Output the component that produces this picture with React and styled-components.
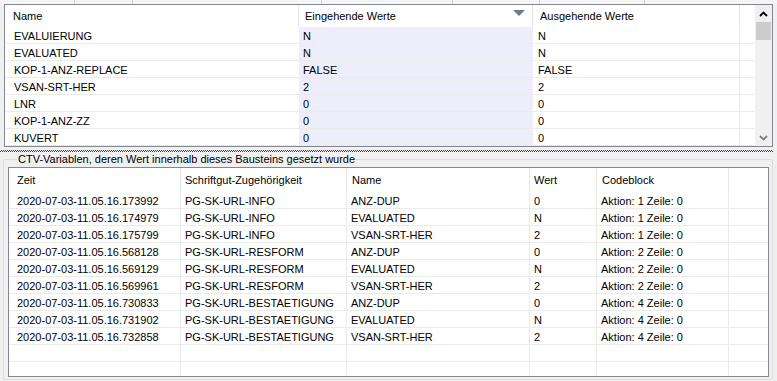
import React from "react";
import styled, { createGlobalStyle } from "styled-components";

const topCols = [294, 234, 207, 15];
const bottomCols = [172, 166, 183, 67, 132, 40];

const topRows = [
  ["EVALUIERUNG", "N", "N"],
  ["EVALUATED", "N", "N"],
  ["KOP-1-ANZ-REPLACE", "FALSE", "FALSE"],
  ["VSAN-SRT-HER", "2", "2"],
  ["LNR", "0", "0"],
  ["KOP-1-ANZ-ZZ", "0", "0"],
  ["KUVERT", "0", "0"],
];

const bottomRows = [
  ["2020-07-03-11.05.16.173992", "PG-SK-URL-INFO", "ANZ-DUP", "0", "Aktion: 1 Zeile: 0"],
  ["2020-07-03-11.05.16.174979", "PG-SK-URL-INFO", "EVALUATED", "N", "Aktion: 1 Zeile: 0"],
  ["2020-07-03-11.05.16.175799", "PG-SK-URL-INFO", "VSAN-SRT-HER", "2", "Aktion: 1 Zeile: 0"],
  ["2020-07-03-11.05.16.568128", "PG-SK-URL-RESFORM", "ANZ-DUP", "0", "Aktion: 2 Zeile: 0"],
  ["2020-07-03-11.05.16.569129", "PG-SK-URL-RESFORM", "EVALUATED", "N", "Aktion: 2 Zeile: 0"],
  ["2020-07-03-11.05.16.569961", "PG-SK-URL-RESFORM", "VSAN-SRT-HER", "2", "Aktion: 2 Zeile: 0"],
  ["2020-07-03-11.05.16.730833", "PG-SK-URL-BESTAETIGUNG", "ANZ-DUP", "0", "Aktion: 4 Zeile: 0"],
  ["2020-07-03-11.05.16.731902", "PG-SK-URL-BESTAETIGUNG", "EVALUATED", "N", "Aktion: 4 Zeile: 0"],
  ["2020-07-03-11.05.16.732858", "PG-SK-URL-BESTAETIGUNG", "VSAN-SRT-HER", "2", "Aktion: 4 Zeile: 0"],
  ["", "", "", "", ""],
  ["", "", "", "", ""],
];

function App() {
  return (
    <>
      <GlobalStyle />
      <Window>
        <TopStrip>
          {[75, 58, 189, 131, 87, 105].map((w, i) => (
            <StripCell key={i} $w={w} />
          ))}
        </TopStrip>

        <TopPanel>
          <TopGrid>
            <Row $cols={topCols} $h={22}>
              <HeadCell $sep $pl={8}>Name</HeadCell>
              <HeadCell $sep $pl={6}>
                Eingehende Werte
                <SortArrow viewBox="0 0 12 6">
                  <path d="M0 0 L12 0 L6 6 Z" fill="#6f7a8a" />
                </SortArrow>
              </HeadCell>
              <HeadCell $sep $pl={7}>Ausgehende Werte</HeadCell>
              <HeadCell />
            </Row>
            {topRows.map((r, i) => (
              <Row key={i} $cols={topCols} $h={17} $line>
                <Cell $pl={9} $pt={3}>{r[0]}</Cell>
                <Cell $bg="#ededfc" $pl={4} $pt={3}>{r[1]}</Cell>
                <Cell $sep $pl={5} $pt={3}>{r[2]}</Cell>
                <Cell />
              </Row>
            ))}
          </TopGrid>
          <ScrollBar>
            <ArrowBox>
              <svg width="9" height="6" viewBox="0 0 9 6">
                <path d="M1 5 L4.5 1.5 L8 5" stroke="#000" strokeWidth="1.8" fill="none" />
              </svg>
            </ArrowBox>
            <Thumb />
            <Track />
            <ArrowBox>
              <svg width="9" height="6" viewBox="0 0 9 6">
                <path d="M1 1 L4.5 4.5 L8 1" stroke="#808080" strokeWidth="1.8" fill="none" />
              </svg>
            </ArrowBox>
          </ScrollBar>
        </TopPanel>

        <Splitter />

        <GroupBox>
          <Legend>CTV-Variablen, deren Wert innerhalb dieses Bausteins gesetzt wurde</Legend>
          <BottomGrid>
            <Row $cols={bottomCols} $h={24}>
              <HeadCell $sep $pt={6} $pl={8}>Zeit</HeadCell>
              <HeadCell $sep $pt={6} $pl={4}>Schriftgut-Zugehörigkeit</HeadCell>
              <HeadCell $sep $pt={6} $pl={5}>Name</HeadCell>
              <HeadCell $sep $pt={6} $pl={4}>Wert</HeadCell>
              <HeadCell $sep $pt={6} $pl={5}>Codeblock</HeadCell>
              <HeadCell />
            </Row>
            {bottomRows.map((r, i) => (
              <Row key={i} $cols={bottomCols} $h={17} $line>
                {r.map((c, j) => (
                  <Cell key={j} $sep $pl={j === 0 ? 8 : 4} $pt={3}>
                    {c}
                  </Cell>
                ))}
                <Cell />
              </Row>
            ))}
          </BottomGrid>
        </GroupBox>
      </Window>
    </>
  );
}

export default App;

const GlobalStyle = createGlobalStyle`
  html, body {
    margin: 0;
    padding: 0;
    background: #f0f0f0;
  }
  body {
    font-family: "Liberation Sans", Arial, sans-serif;
    font-size: 11px;
    color: #000;
  }
`;

const Window = styled.div`
  width: 777px;
  height: 381px;
  display: flex;
  flex-direction: column;
  background: #f0f0f0;
  overflow: hidden;
`;

const TopStrip = styled.div`
  height: 4px;
  display: flex;
  background: #f5f5f5;
`;

const StripCell = styled.div`
  width: ${(p) => p.$w - 1}px;
  border-right: 1px solid #d6d6d6;
`;

const TopPanel = styled.div`
  height: 141px;
  flex-shrink: 0;
  margin: 0 4px 0 4px;
  border: 1px solid #828790;
  background: #fff;
  display: flex;
`;

const TopGrid = styled.div`
  flex: 1;
  overflow: hidden;
`;

const Row = styled.div`
  display: grid;
  grid-template-columns: ${(p) => p.$cols.map((c) => c + "px").join(" ")} 1fr;
  height: ${(p) => p.$h}px;
  border-bottom: ${(p) => (p.$line ? "1px solid #ebebeb" : "none")};
  box-sizing: border-box;
`;

const HeadCell = styled.div`
  position: relative;
  padding: ${(p) => p.$pt || 5}px 0 0 ${(p) => p.$pl || 8}px;
  border-right: ${(p) => (p.$sep ? "1px solid #e5e5e5" : "none")};
  white-space: nowrap;
  overflow: hidden;
  line-height: 13px;
`;

const Cell = styled.div`
  padding: ${(p) => p.$pt || 1}px 0 0 ${(p) => p.$pl || 4}px;
  background: ${(p) => p.$bg || "transparent"};
  border-right: ${(p) => (p.$sep ? "1px solid #ebebeb" : "none")};
  white-space: nowrap;
  overflow: hidden;
  line-height: 13px;
`;

const SortArrow = styled.svg`
  position: absolute;
  right: 7px;
  top: 5px;
  width: 12px;
  height: 6px;
`;

const ScrollBar = styled.div`
  width: 17px;
  background: #f0f0f0;
  display: flex;
  flex-direction: column;
`;

const ArrowBox = styled.div`
  height: 17px;
  display: flex;
  align-items: center;
  justify-content: center;
`;

const Thumb = styled.div`
  height: 18px;
  margin: 0 1px;
  background: #cdcdcd;
`;

const Track = styled.div`
  flex: 1;
`;

const Splitter = styled.div`
  height: 2px;
  flex-shrink: 0;
  margin: 3px 4px 0 0;
  background: repeating-conic-gradient(#3a3a3a 0 25%, #ffffff 0 50%) 0 0 / 2px 2px;
`;

const GroupBox = styled.fieldset`
  flex: 1;
  min-height: 0;
  margin: 1px 4px 1px 3px;
  padding: 0 3px 2px 4px;
  border: 1px solid #dcdcdc;
  border-radius: 2px;
  min-width: 0;
  display: flex;
  flex-direction: column;
`;

const Legend = styled.legend`
  padding: 0 1px;
  margin-left: 9px;
  line-height: 13px;
  color: #000;
`;

const BottomGrid = styled.div`
  flex: 1;
  min-height: 0;
  margin-top: 1px;
  border: 1px solid #828790;
  background: #fff;
  overflow: hidden;
`;
